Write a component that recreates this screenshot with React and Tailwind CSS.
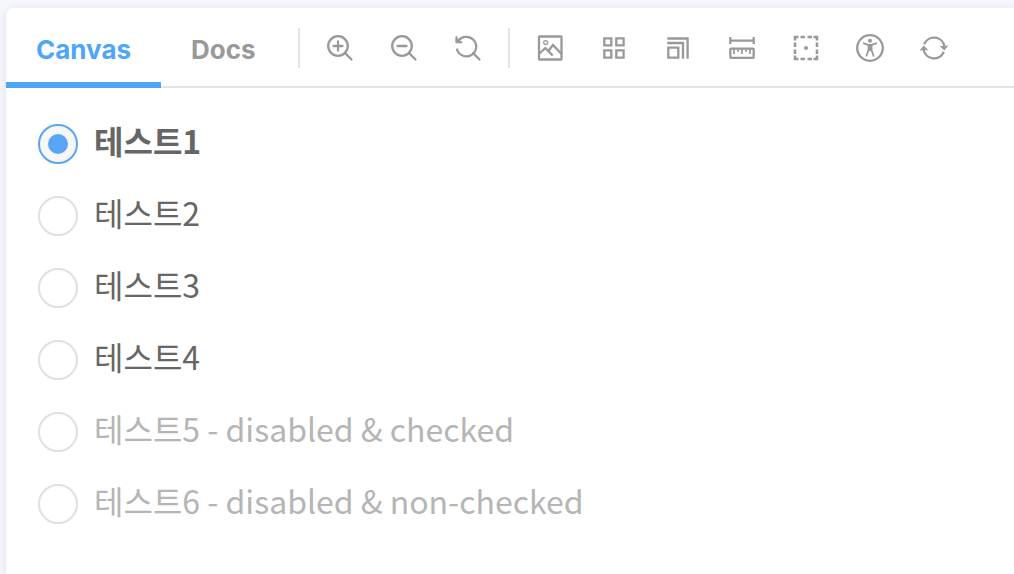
import { useState } from 'react';

const Icon = ({ children }) => (
  <svg
    viewBox="0 0 28 28"
    className="size-7"
    fill="none"
    stroke="currentColor"
    strokeWidth="2.3"
    aria-hidden="true"
  >
    {children}
  </svg>
);

const zoomTools = [
  {
    label: 'Zoom in',
    icon: (
      <Icon>
        <circle cx="12" cy="12" r="9.8" />
        <path d="M19 19l6.5 6.500M12 7.500v9M7.500 12h9" strokeLinecap="round" />
      </Icon>
    ),
  },
  {
    label: 'Zoom out',
    icon: (
      <Icon>
        <circle cx="12" cy="12" r="9.8" />
        <path d="M19 19l6.500 6.500M7.500 12h9" strokeLinecap="round" />
      </Icon>
    ),
  },
  {
    label: 'Reset zoom',
    icon: (
      <Icon>
        <path d="M4 7.500A9.800 9.800 0 1 1 3 15.500" strokeLinecap="round" />
        <path
          d="M19 19l6.500 6.500M2.500 3.500v4.700h4.700M2.500 8.200l3-3"
          strokeLinecap="round"
          strokeLinejoin="round"
        />
      </Icon>
    ),
  },
];

const viewTools = [
  {
    label: 'Change the background of the preview',
    icon: (
      <Icon>
        <rect x="3" y="2.5" width="22.5" height="23" rx="0.5" />
        <circle cx="9.7" cy="8.6" r="2" strokeWidth="1.3" />
        <path d="M3 20l6.300-6 7.400 7.500M12.300 17l4.700-6 8.500 9" />
      </Icon>
    ),
  },
  {
    label: 'Apply a grid to the preview',
    icon: (
      <Icon>
        <path d="M4.300 4.300h7v7h-7zM16.300 4.300h7.300v7h-7.300zM4.300 16.300h7v7.300h-7zM16.300 16.300h7.300v7.300h-7.300z" />
      </Icon>
    ),
  },
  {
    label: 'Change the size of the preview',
    icon: (
      <Icon>
        <path d="M4.300 13.700h10v10h-10zM3.300 9h15.700v15.700M3.300 4.500h20.300v20.200" />
      </Icon>
    ),
  },
  {
    label: 'Enable measure',
    icon: (
      <Icon>
        <path d="M2.300 3v7M25.700 3v7M2.300 6.600h23.400" />
        <rect x="2.3" y="14.6" width="23.4" height="9.2" rx="0.8" />
        <path d="M6 15v5M10 15v3M14 15v5M18 15v3M22 15v5" strokeWidth="1.7" />
      </Icon>
    ),
  },
  {
    label: 'Apply outlines to the preview',
    icon: (
      <Icon>
        <path
          d="M3 6.500V3h3.500M21.500 3h3.500v3.500M25 21.500v3.500h-3.500M6.500 25H3v-3.500M8.500 3h4.500M15.500 3h4.500M8.500 25h4.500M15.500 25h4.500M3 8.500v4.500M3 15.500v4.500M25 8.500v4.500M25 15.500v4.500"
          strokeWidth="2.6"
        />
        <circle cx="14" cy="14" r="2" fill="currentColor" stroke="none" />
      </Icon>
    ),
  },
  {
    label: 'Vision simulator',
    icon: (
      <Icon>
        <circle cx="14" cy="14" r="12.8" />
        <circle cx="14" cy="6.8" r="2" fill="currentColor" stroke="none" />
        <path
          d="M7.800 9.300L12 10.800h4l4.200-1.500M15.500 11v5l2 5.800M12.500 11v5l-2 5.800"
          strokeWidth="1.8"
          strokeLinecap="round"
          strokeLinejoin="round"
        />
        <path d="M12 10.500h4v6.500h-4z" fill="currentColor" stroke="none" />
      </Icon>
    ),
  },
  {
    label: 'Remount component',
    icon: (
      <Icon>
        <path d="M4.200 10.300A10.600 10.600 0 0 1 24.500 12.500M23.800 17.800A10.600 10.600 0 0 1 3.500 15.500" />
        <path
          d="M20.500 12.300l3.800 3.700 3.200-4.200-3 1zM7.500 15.800l-3.800-3.700-3.200 4.200 3-1z"
          fill="currentColor"
          strokeWidth="1"
          strokeLinejoin="round"
        />
      </Icon>
    ),
  },
];

const options = [
  { value: '1', label: '테스트1' },
  { value: '2', label: '테스트2' },
  { value: '3', label: '테스트3' },
  { value: '4', label: '테스트4' },
  { value: '5', label: '테스트5 - disabled & checked', disabled: true },
  { value: '6', label: '테스트6 - disabled & non-checked', disabled: true },
];

const ToolGroup = ({ tools }) => (
  <div className="flex items-center gap-2 border-l-2 border-[#e5e5e5] h-10 px-3">
    {tools.map((tool) => (
      <button
        key={tool.label}
        type="button"
        aria-label={tool.label}
        className="flex size-14 items-center justify-center text-[#999999]"
      >
        {tool.icon}
      </button>
    ))}
  </div>
);

const Toolbar = () => {
  const [tab, setTab] = useState('Canvas');

  return (
    <div className="flex h-20 items-center shadow-[inset_0_-2px_0_#e5e5e5] font-['Inter',sans-serif]">
      <div className="flex self-stretch pr-3">
        {['Canvas', 'Docs'].map((name) => (
          <button
            key={name}
            type="button"
            onClick={() => setTab(name)}
            className={`border-b-6 px-[30px] pt-2 text-[26px] font-bold ${
              tab === name
                ? 'border-b-[#4ea6f8] text-[#4ea6f8]'
                : 'border-b-transparent text-[#999999]'
            }`}
          >
            {name}
          </button>
        ))}
      </div>
      <ToolGroup tools={zoomTools} />
      <ToolGroup tools={viewTools} />
    </div>
  );
};

const RadioGroup = () => {
  const [selected, setSelected] = useState('1');

  return (
    <div className="flex flex-col gap-8 p-8 pt-9 font-['Noto_Sans_CJK_KR',sans-serif]">
      {options.map(({ value, label, disabled }) => (
        <label
          key={value}
          className={`flex h-10 items-start gap-4 text-[32px] leading-8 ${
            disabled ? 'text-[#b5b5b5]' : 'text-[#666666]'
          } ${selected === value ? 'font-bold' : 'font-normal'}`}
        >
          <input
            type="radio"
            name="test"
            value={value}
            checked={selected === value}
            disabled={disabled}
            onChange={() => setSelected(value)}
            className="flex size-10 shrink-0 appearance-none items-center justify-center rounded-full border-2 border-[#e0e0e0] bg-white checked:border-[#5aa5f7] checked:bg-[#f7f7f7] checked:before:size-5 checked:before:rounded-full checked:before:bg-[#5aa5f7]"
          />
          <span>{label}</span>
        </label>
      ))}
    </div>
  );
};

const App = () => (
  <div className="min-h-screen bg-[#f6f7fc] pt-2 pl-1.5 flex">
    <main className="flex-1 overflow-hidden rounded-tl-lg bg-white shadow-[0_2px_10px_rgba(0,0,0,0.1)]">
      <Toolbar />
      <RadioGroup />
    </main>
  </div>
);

export default App;
